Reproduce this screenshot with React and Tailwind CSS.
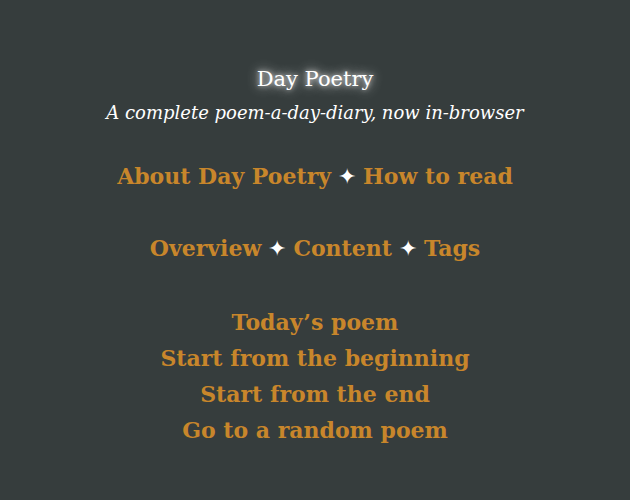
import React from 'react';

const Star = () => <span className="text-white"> ✦ </span>;

const Link = ({ children }) => (
  <a href="#" className="text-[#c8862b] font-bold no-underline">
    {children}
  </a>
);

export default function App() {
  return (
    <div
      className="w-[630px] h-[500px] bg-[#363d3d] flex flex-col items-center text-center"
      style={{ fontFamily: 'Georgia, "DejaVu Serif", serif' }}
    >
      <h1
        className="mt-[64px] text-[21px] leading-[30px] text-white"
        style={{ textShadow: '0 0 12px rgba(255,255,255,0.9), 0 0 5px rgba(255,255,255,0.7)' }}
      >
        Day Poetry
      </h1>
      <p className="mt-[6px] text-[18px] leading-[26px] italic text-white">
        A complete poem-a-day-diary, now in-browser
      </p>

      <nav className="mt-[32px] text-[22px] leading-[36px]">
        <Link>About Day Poetry</Link>
        <Star />
        <Link>How to read</Link>
      </nav>

      <nav className="mt-[35px] text-[22px] leading-[36px]">
        <Link>Overview</Link>
        <Star />
        <Link>Content</Link>
        <Star />
        <Link>Tags</Link>
      </nav>

      <ul className="mt-[38px] text-[22px] leading-[35px] flex flex-col items-center">
        <li className="h-[36px]"><Link>Today’s poem</Link></li>
        <li className="h-[36px]"><Link>Start from the beginning</Link></li>
        <li className="h-[36px]"><Link>Start from the end</Link></li>
        <li className="h-[36px]"><Link>Go to a random poem</Link></li>
      </ul>
    </div>
  );
}
